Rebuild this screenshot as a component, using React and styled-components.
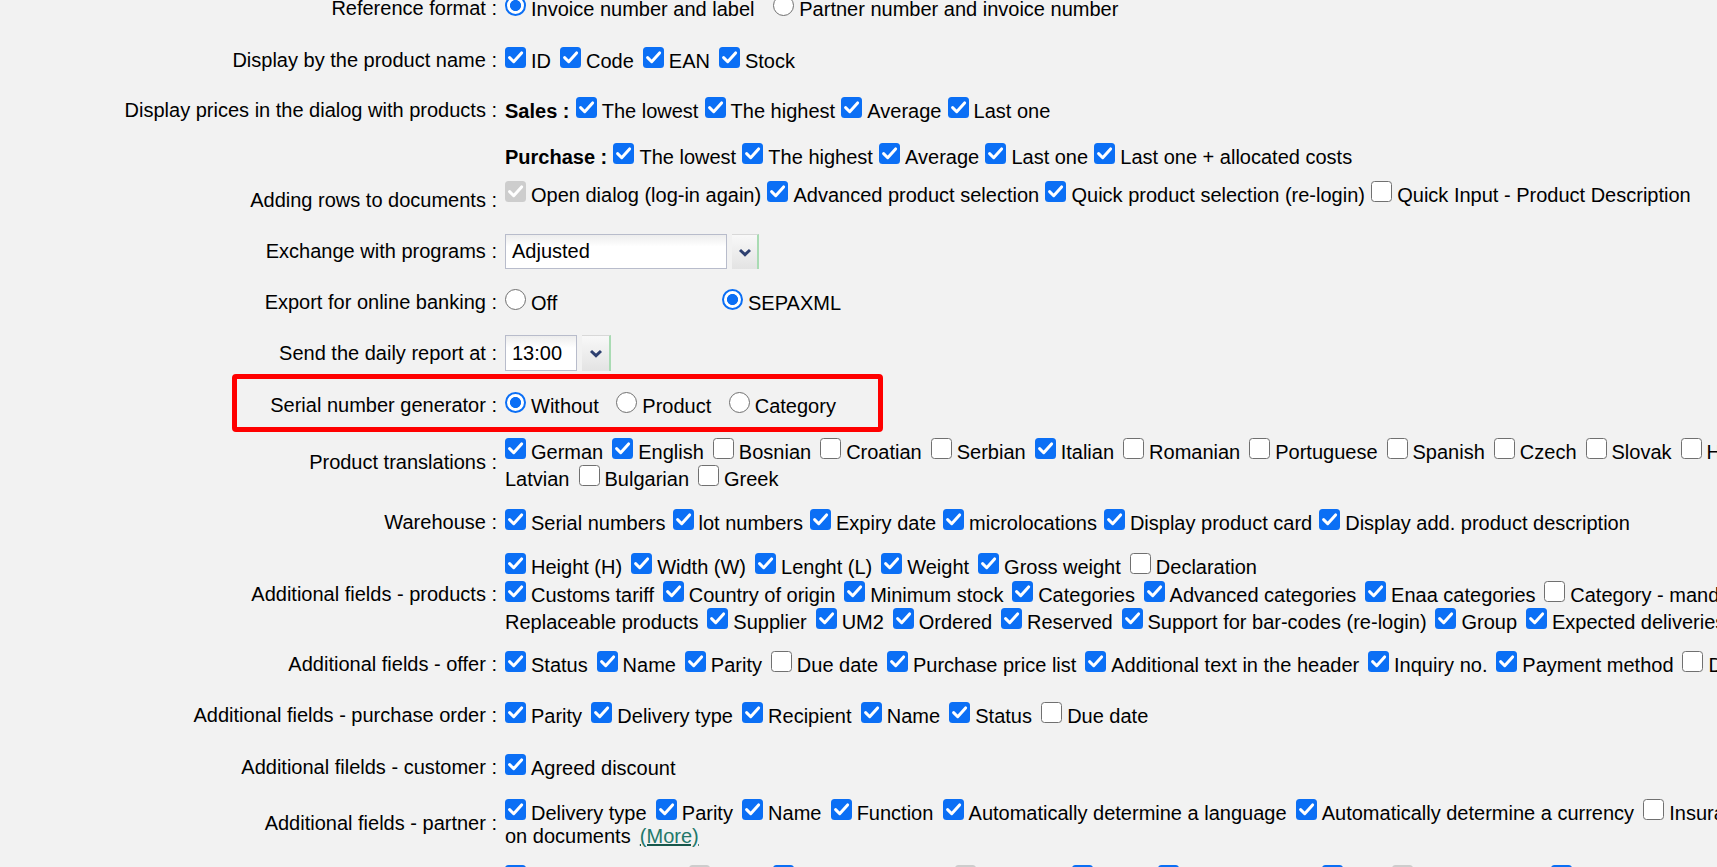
import React from 'react';
import styled, { createGlobalStyle } from 'styled-components';

const GlobalStyle = createGlobalStyle`
  html, body { margin: 0; padding: 0; background: #f2f2f2; overflow: hidden; }
  body { font-family: "Liberation Sans", Arial, sans-serif; font-size: 20px; color: #000; }
`;

const Page = styled.div`
  margin-top: -17.8px;
  width: max-content;
`;

const Row = styled.div`
  position: relative;
  box-sizing: border-box;
  display: grid;
  grid-template-columns: 497px max-content;
  grid-template-rows: minmax(0, 1fr);
  column-gap: 8px;
  align-items: center;
  height: ${p => p.$h}px;
  padding-top: ${p => Math.max(0, p.$dy || 0) * 2}px;
  padding-bottom: ${p => Math.max(0, -(p.$dy || 0)) * 2}px;
`;

const Label = styled.div`
  text-align: right;
  line-height: 27px;
  white-space: nowrap;
`;

const Content = styled.div`
  padding-top: ${p => Math.max(0, p.$shift || 0) * 2}px;
  padding-bottom: ${p => Math.max(0, -(p.$shift || 0)) * 2}px;
`;

const Line = styled.div`
  height: ${p => p.$h || 27}px;
  line-height: ${p => p.$h || 27}px;
  white-space: nowrap;
  & > * + * { margin-left: ${p => (p.$gap ?? 7)}px; }
`;

const Heading = styled.b`
  font-weight: bold;
`;

const OptLabel = styled.label`
  white-space: nowrap;
`;

const Box = styled.span`
  display: inline-block;
  box-sizing: border-box;
  width: 21px;
  height: 21px;
  margin-right: 5px;
  vertical-align: baseline;
  border-radius: 3.5px;
  background: ${p => (p.$on ? (p.$dis ? '#cdcdcd' : '#0b6ff5') : '#fff')};
  border: ${p => (p.$on ? '0' : '1.5px solid #707070')};
  & > svg { display: block; }
`;

const RadioMark = styled.span`
  display: inline-block;
  box-sizing: border-box;
  width: 21px;
  height: 21px;
  margin-right: 5px;
  vertical-align: baseline;
  border-radius: 50%;
  border: ${p => (p.$on ? '2px solid #0b6ff5' : '1.5px solid #707070')};
  background: ${p =>
    p.$on ? 'radial-gradient(circle, #0b6ff5 0 5.2px, #fff 5.9px)' : '#fff'};
`;

const ChoiceGrid = styled.div`
  display: grid;
  grid-template-columns: ${p => p.$col}px max-content;
  line-height: 27px;
  white-space: nowrap;
`;

const Combo = styled.div`
  display: flex;
  gap: 5px;
  width: max-content;
`;

const ComboField = styled.div`
  box-sizing: border-box;
  width: ${p => p.$w}px;
  height: ${p => p.$h}px;
  border: 1px solid #b8bccb;
  background: linear-gradient(#ededed, #fff 35%);
  padding: 0 6px;
  line-height: ${p => p.$h - 2}px;
`;

const ComboButton = styled.div`
  box-sizing: border-box;
  width: ${p => p.$w}px;
  height: ${p => p.$h}px;
  background: linear-gradient(#f8f8f8, #e3e3e3);
  border-top: 1px solid #d8d8d8;
  border-right: 2px solid #a9dbb3;
  display: flex;
  align-items: center;
  justify-content: center;
`;

const Highlight = styled.div`
  position: absolute;
  left: 232px;
  top: -4.9px;
  width: 651px;
  height: 58px;
  box-sizing: border-box;
  border: 5px solid #ff0000;
  border-radius: 4px;
  pointer-events: none;
`;

const MoreLink = styled.a`
  color: #23786a;
  text-decoration: underline;
  text-decoration-color: #17574b;
  cursor: pointer;
`;

const Tick = () => (
  <svg width="21" height="21" viewBox="0 0 21 21" aria-hidden="true">
    <path
      d="M4.6 10.6 L8.7 14.7 L16.6 5.9"
      fill="none"
      stroke="#fff"
      strokeWidth="3"
      strokeLinecap="round"
      strokeLinejoin="round"
    />
  </svg>
);

const Chevron = () => (
  <svg width="14" height="9" viewBox="0 0 14 9" aria-hidden="true">
    <path d="M2 2 L7 6.6 L12 2" fill="none" stroke="#2d3f6f" strokeWidth="3" />
  </svg>
);

function Opt({ on, dis, children }) {
  return (
    <OptLabel>
      <Box $on={on} $dis={dis}>{on && <Tick />}</Box>
      {children}
    </OptLabel>
  );
}

function Rad({ on, children }) {
  return (
    <OptLabel>
      <RadioMark $on={on} />
      {children}
    </OptLabel>
  );
}

function Select({ value, w, bw, h }) {
  return (
    <Combo>
      <ComboField $w={w} $h={h}>{value}</ComboField>
      <ComboButton $w={bw} $h={h}><Chevron /></ComboButton>
    </Combo>
  );
}

export default function App() {
  return (
    <>
      <GlobalStyle />
      <Page>
        <Row $h={52.2}>
          <Label>Reference format :</Label>
          <Content>
            <Line $gap={18.8}>
              <Rad on>Invoice number and label</Rad>
              <Rad>Partner number and invoice number</Rad>
            </Line>
          </Content>
        </Row>

        <Row $h={51.1} $dy={0.55}>
          <Label>Display by the product name :</Label>
          <Content>
            <Line $gap={9}>
              <Opt on>ID</Opt>
              <Opt on>Code</Opt>
              <Opt on>EAN</Opt>
              <Opt on>Stock</Opt>
            </Line>
          </Content>
        </Row>

        <Row $h={48.5} $dy={1.2}>
          <Label>Display prices in the dialog with products :</Label>
          <Content>
            <Line $gap={6.2}>
              <Heading>Sales :</Heading>
              <Opt on>The lowest</Opt>
              <Opt on>The highest</Opt>
              <Opt on>Average</Opt>
              <Opt on>Last one</Opt>
            </Line>
          </Content>
        </Row>

        <Row $h={44.6} $dy={0.6}>
          <Label />
          <Content>
            <Line $gap={6.2}>
              <Heading>Purchase :</Heading>
              <Opt on>The lowest</Opt>
              <Opt on>The highest</Opt>
              <Opt on>Average</Opt>
              <Opt on>Last one</Opt>
              <Opt on>Last one + allocated costs</Opt>
            </Line>
          </Content>
        </Row>

        <Row $h={47.1} $dy={-1.3}>
          <Label>Adding rows to documents :</Label>
          <Content $shift={-6.2}>
            <Line $gap={6.3}>
              <Opt on dis>Open dialog (log-in again)</Opt>
              <Opt on>Advanced product selection</Opt>
              <Opt on>Quick product selection (re-login)</Opt>
              <Opt>Quick Input - Product Description</Opt>
            </Line>
          </Content>
        </Row>

        <Row $h={51.5} $dy={0.25}>
          <Label>Exchange with programs :</Label>
          <Select value="Adjusted" w={222} bw={27} h={35} />
        </Row>

        <Row $h={50.8}>
          <Label>Export for online banking :</Label>
          <ChoiceGrid $col={217}>
            <Rad>Off</Rad>
            <Rad on>SEPAXML</Rad>
          </ChoiceGrid>
        </Row>

        <Row $h={51.4} $dy={-0.4}>
          <Label>Send the daily report at :</Label>
          <Select value="13:00" w={72} bw={29} h={36} />
        </Row>

        <Row $h={54.7} $dy={-1.25}>
          <Label>Serial number generator :</Label>
          <Content>
            <Line $gap={17.5}>
              <Rad on>Without</Rad>
              <Rad>Product</Rad>
              <Rad>Category</Rad>
            </Line>
          </Content>
          <Highlight />
        </Row>

        <Row $h={57.25}>
          <Label>Product translations :</Label>
          <Content $shift={2.55}>
            <Line $gap={9}>
              <Opt on>German</Opt>
              <Opt on>English</Opt>
              <Opt>Bosnian</Opt>
              <Opt>Croatian</Opt>
              <Opt>Serbian</Opt>
              <Opt on>Italian</Opt>
              <Opt>Romanian</Opt>
              <Opt>Portuguese</Opt>
              <Opt>Spanish</Opt>
              <Opt>Czech</Opt>
              <Opt>Slovak</Opt>
              <Opt>Hungarian</Opt>
              <Opt>Polish</Opt>
            </Line>
            <Line $gap={9}>
              <span>Latvian</span>
              <Opt>Bulgarian</Opt>
              <Opt>Greek</Opt>
            </Line>
          </Content>
        </Row>

        <Row $h={65.45} $dy={-1.9}>
          <Label>Warehouse :</Label>
          <Content>
            <Line $gap={7}>
              <Opt on>Serial numbers</Opt>
              <Opt on>lot numbers</Opt>
              <Opt on>Expiry date</Opt>
              <Opt on>microlocations</Opt>
              <Opt on>Display product card</Opt>
              <Opt on>Display add. product description</Opt>
            </Line>
          </Content>
        </Row>

        <Row $h={72} $dy={1.6}>
          <Label>Additional fields - products :</Label>
          <Content>
            <Line $h={27.4} $gap={9}>
              <Opt on>Height (H)</Opt>
              <Opt on>Width (W)</Opt>
              <Opt on>Lenght (L)</Opt>
              <Opt on>Weight</Opt>
              <Opt on>Gross weight</Opt>
              <Opt>Declaration</Opt>
            </Line>
            <Line $h={27.4} $gap={8.7}>
              <Opt on>Customs tariff</Opt>
              <Opt on>Country of origin</Opt>
              <Opt on>Minimum stock</Opt>
              <Opt on>Categories</Opt>
              <Opt on>Advanced categories</Opt>
              <Opt on>Enaa categories</Opt>
              <Opt>Category - mandatory</Opt>
              <Opt on>Alternative products</Opt>
            </Line>
            <Line $h={27.4} $gap={8.9}>
              <span>Replaceable products</span>
              <Opt on>Supplier</Opt>
              <Opt on>UM2</Opt>
              <Opt on>Ordered</Opt>
              <Opt on>Reserved</Opt>
              <Opt on>Support for bar-codes (re-login)</Opt>
              <Opt on>Group</Opt>
              <Opt on>Expected deliveries</Opt>
            </Line>
          </Content>
        </Row>

        <Row $h={60.55} $dy={5.3}>
          <Label>Additional fields - offer :</Label>
          <Content>
            <Line $gap={8.9}>
              <Opt on>Status</Opt>
              <Opt on>Name</Opt>
              <Opt on>Parity</Opt>
              <Opt>Due date</Opt>
              <Opt on>Purchase price list</Opt>
              <Opt on>Additional text in the header</Opt>
              <Opt on>Inquiry no.</Opt>
              <Opt on>Payment method</Opt>
              <Opt>Delivery type</Opt>
            </Line>
          </Content>
        </Row>

        <Row $h={51.35} $dy={0.6}>
          <Label>Additional fields - purchase order :</Label>
          <Content>
            <Line $gap={9.2}>
              <Opt on>Parity</Opt>
              <Opt on>Delivery type</Opt>
              <Opt on>Recipient</Opt>
              <Opt on>Name</Opt>
              <Opt on>Status</Opt>
              <Opt>Due date</Opt>
            </Line>
          </Content>
        </Row>

        <Row $h={54.1} $dy={-0.3}>
          <Label>Additional filelds - customer :</Label>
          <Content>
            <Line>
              <Opt on>Agreed discount</Opt>
            </Line>
          </Content>
        </Row>

        <Row $h={56.15} $dy={0.5}>
          <Label>Additional fields - partner :</Label>
          <Content>
            <Line $gap={9.2}>
              <Opt on>Delivery type</Opt>
              <Opt on>Parity</Opt>
              <Opt on>Name</Opt>
              <Opt on>Function</Opt>
              <Opt on>Automatically determine a language</Opt>
              <Opt on>Automatically determine a currency</Opt>
              <Opt>Insurance</Opt>
            </Line>
            <Line $h={21.6} $gap={9.2}>
              <span>on documents</span>
              <MoreLink>(More)</MoreLink>
            </Line>
          </Content>
        </Row>

        <Row $h={56}>
          <Label>Additional fields - invoice :</Label>
          <Content>
            <Line>
              <Opt on>Payment method</Opt>
              <Opt on dis>Parity</Opt>
              <Opt on>Delivery address</Opt>
              <Opt on dis>Recipient</Opt>
              <Opt on>Name</Opt>
              <Opt on>Status of order</Opt>
              <Opt on>Due</Opt>
              <Opt on dis>Additional text</Opt>
              <Opt on>Group</Opt>
            </Line>
          </Content>
        </Row>
      </Page>
    </>
  );
}
